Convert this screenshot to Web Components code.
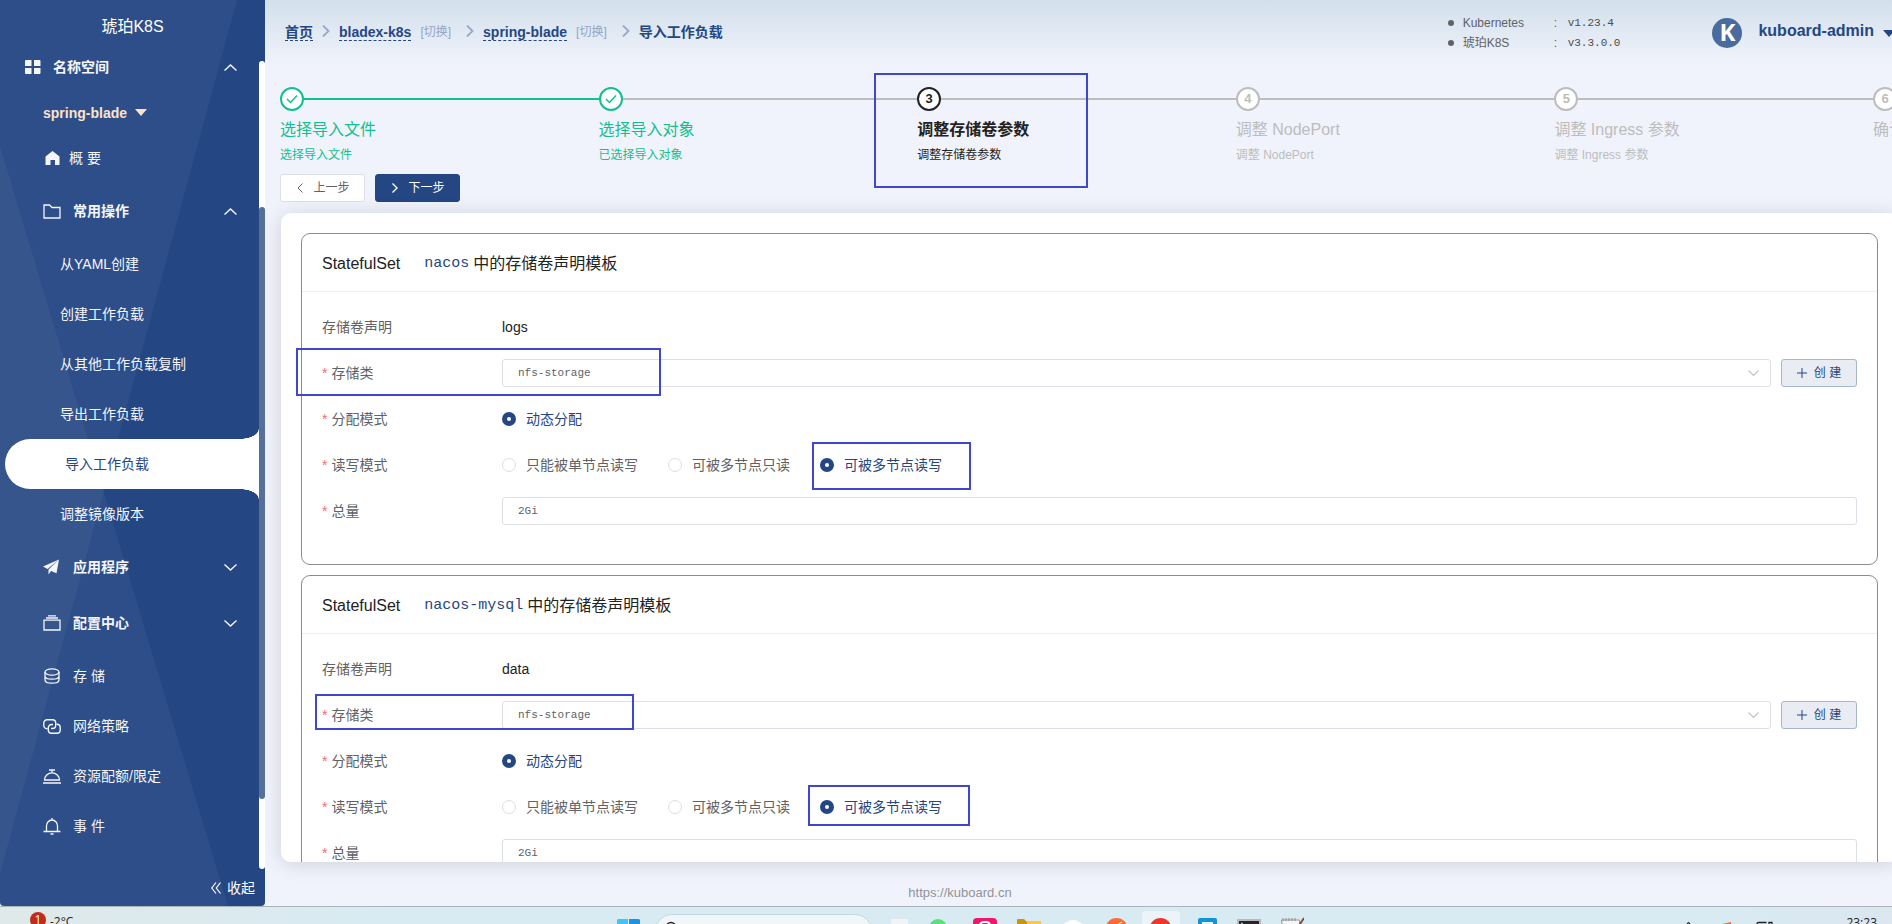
<!DOCTYPE html>
<html lang="zh-CN">
<head>
<meta charset="utf-8">
<title>导入工作负载 - 琥珀K8S</title>
<style>
  html, body { height: 100%; margin: 0; }
  body {
    --brand: #244783;
    --page: #f0f3fb;
    --line: #dcdfe6;
    --mono: "Liberation Mono", "DejaVu Sans Mono", monospace;
    display: grid;
    grid-template-rows: minmax(0, 1fr) 18px;
    overflow: hidden;
    background: var(--page);
    color: #222;
    font: 14px/20px "Liberation Sans", "Noto Sans CJK SC", sans-serif;
  }
  .app { display: grid; grid-template-columns: 265px minmax(0, 1fr); min-height: 0; }
</style>
</head>
<body>
<div class="app">
  <kb-sidebar>
    <nav-item kind="top" icon="grid" arrow="up">名称空间</nav-item>
    <nav-item kind="space">spring-blade</nav-item>
    <nav-item kind="home" icon="home">概 要</nav-item>
    <nav-item kind="group" icon="folder" arrow="up">常用操作</nav-item>
    <nav-item kind="sub">从YAML创建</nav-item>
    <nav-item kind="sub">创建工作负载</nav-item>
    <nav-item kind="sub">从其他工作负载复制</nav-item>
    <nav-item kind="sub">导出工作负载</nav-item>
    <nav-item kind="active">导入工作负载</nav-item>
    <nav-item kind="sub">调整镜像版本</nav-item>
    <nav-item kind="group" icon="plane" arrow="down">应用程序</nav-item>
    <nav-item kind="group" icon="files" arrow="down">配置中心</nav-item>
    <nav-item icon="coin">存 储</nav-item>
    <nav-item icon="link">网络策略</nav-item>
    <nav-item icon="dish">资源配额/限定</nav-item>
    <nav-item icon="bell">事 件</nav-item>
  </kb-sidebar>
  <kb-page>
    <kb-header slot="header"></kb-header>
    <kb-steps slot="steps">
      <kb-step state="done" line="done"><span slot="title">选择导入文件</span>选择导入文件</kb-step>
      <kb-step state="done"><span slot="title">选择导入对象</span>已选择导入对象</kb-step>
      <kb-step state="current" number="3"><span slot="title">调整存储卷参数</span>调整存储卷参数
        <mark-box slot="over" style="left:-43px;top:-14px;width:214px;height:115px"></mark-box></kb-step>
      <kb-step number="4"><span slot="title">调整 NodePort</span>调整 NodePort</kb-step>
      <kb-step number="5"><span slot="title">调整 Ingress 参数</span>调整 Ingress 参数</kb-step>
      <kb-step number="6"><span slot="title">确认</span></kb-step>
    </kb-steps>
    <kb-button slot="actions" icon="left">上一步</kb-button>
    <kb-button slot="actions" icon="right" kind="primary">下一步</kb-button>
    <claim-card workload="nacos" claim="logs">
      <mark-box style="left:-6px;top:114px;width:365px;height:48px"></mark-box>
      <mark-box style="left:510px;top:208px;width:159px;height:48px"></mark-box>
    </claim-card>
    <claim-card workload="nacos-mysql" claim="data">
      <mark-box style="left:13px;top:118px;width:319px;height:36px"></mark-box>
      <mark-box style="left:506px;top:209px;width:162px;height:41px"></mark-box>
    </claim-card>
  </kb-page>
</div>
<task-bar></task-bar>

<script>
const S = 'fill="none" stroke="currentColor"';
const ICONS = {
  grid: [16, 14, '<path fill="currentColor" d="M1 0h5.500v6H0V1q0-1 1-1zM9 0h5.500q1 0 1 1v5H9zM0 8h6.500v6H1q-1 0-1-1zM9 8h6.500v5q0 1-1 1H9z"/>'],
  home: [15, 14, '<path fill="currentColor" d="M7.500 0 14.500 5.500V14H10V9H5.500v5H.500V5.500z"/>'],
  folder: [18, 15, `<path ${S} stroke-width="1.300" d="M1 1h5.500l2.500 2.500h8V14H1z"/>`],
  plane: [17, 16, '<path fill="currentColor" d="M16 .500 0 7.500l4.500 2.500zM16 .500 5.500 10.500v5l2.500-3.500 5.500 2.300z"/>'],
  files: [18, 16, `<path ${S} stroke-width="1.300" d="M1 5.200h16V15H1zM3 3h12M5 .800h8"/>`],
  coin: [18, 16, `<g ${S} stroke-width="1.300"><ellipse cx="9" cy="4" rx="7" ry="3.200"/><path d="M2 4v8c0 1.800 3 3.200 7 3.200s7-1.400 7-3.200V4M2 8c0 1.800 3 3.200 7 3.200S16 9.800 16 8"/></g>`],
  link: [18, 15, `<g ${S} stroke-width="1.400"><path d="M4.500 9.800H4A3.200 3.200 0 0 1 .800 6.600V4A3.200 3.200 0 0 1 4 .800h5.500A3.200 3.200 0 0 1 12.700 4v2.300A3.200 3.200 0 0 1 9.500 9.500H8"/><path d="M13.500 5.200h.500A3.200 3.200 0 0 1 17.200 8.400V11a3.200 3.200 0 0 1-3.200 3.200H8.500A3.200 3.200 0 0 1 5.300 11V8.700A3.200 3.200 0 0 1 8.500 5.500H10"/></g>`],
  dish: [18, 15, `<path ${S} stroke-width="1.300" d="M1.500 11a7.500 7.200 0 0 1 15 0zM0 14h18M9 4V1M6 1h6"/>`],
  bell: [18, 17, `<path ${S} stroke-width="1.300" d="M3.500 13.500V8a5.500 6 0 0 1 11 0v5.500M.500 13.500h17M9 2V0M7.500 16h3"/>`],
  up: [13, 7, `<path ${S} stroke-width="1.400" d="M.500 6.500l6-5.500 6 5.500"/>`],
  down: [13, 7, `<path ${S} stroke-width="1.400" d="M.500.500l6 5.500 6-5.500"/>`],
  caret: [12, 7, '<path fill="currentColor" d="M0 0h12L6 7z"/>'],
  fold: [10, 12, `<path ${S} stroke-width="1.200" d="M5 .500.800 6 5 11.500M9.500.500 5.300 6l4.200 5.500"/>`],
  crumb: [8, 12, `<path ${S} stroke-width="1.800" d="M1 .500 6.500 6 1 11.500"/>`],
  left: [6, 10, `<path ${S} d="M5.500.500 1 5l4.500 4.500"/>`],
  right: [6, 10, `<path ${S} stroke-width="1.400" d="M.500.500 5 5 .500 9.500"/>`],
  select: [11, 7, `<path ${S} stroke-width="1.200" d="M.500.500l5 5 5-5"/>`],
  plus: [10, 10, `<path ${S} d="M5 0v10M0 5h10"/>`],
  check: [12, 10, `<path ${S} stroke-width="1.500" d="M1 5l3.500 3.500L11 1.500"/>`]
};
const icon = name => {
  const [w, h, body] = ICONS[name];
  return `<svg aria-hidden="true" width="${w}" height="${h}" viewBox="0 0 ${w} ${h}">${body}</svg>`;
};
const RESET = `*{box-sizing:border-box} a{color:inherit;text-decoration:none}
  button,input,select{font:inherit;color:inherit;margin:0;background:none;border:0;padding:0;text-align:left}
  svg{display:block;flex:none}`;
const define = (tag, render) => customElements.define(tag, class extends HTMLElement {
  constructor() { super(); this.attachShadow({ mode: 'open' }); }
  connectedCallback() { this.shadowRoot.innerHTML = render(this); }
});

define('mark-box', () => `<style>:host{display:block;position:absolute;box-sizing:border-box;border:2px solid #3f48cc;pointer-events:none;z-index:2}</style>`);

define('kb-sidebar', () => `<style>${RESET}
  :host{display:grid;position:relative;isolation:isolate;min-height:0;overflow:hidden;color:#fff;background:var(--brand);
    grid-template:42px minmax(0,1fr) 37px / minmax(0,1fr) 6px;border-radius:0 0 4px 4px}
  :host::before,:host::after{content:"";position:absolute;inset:0;z-index:-1;background:rgba(255,255,255,.045)}
  :host::before{clip-path:polygon(0 0,237px 0,0 874px)}
  :host::after{clip-path:polygon(0 146px,228px 100%,0 100%)}
  h1{grid-area:1/1/2/3;margin:0;font-size:16px;font-weight:400;line-height:54px;text-align:center}
  nav{grid-area:2/1/3/2;min-height:0}
  .track{grid-area:1/2/4/3;margin:61px 0 37px;background:#fff;border-radius:3px;display:grid;grid-template-rows:146fr 592fr 70fr}
  .track i{grid-row:2;background:#566f99;border-radius:3px}
  .fold{grid-area:3/1/4/3;display:flex;align-items:center;justify-content:flex-end;gap:6px;padding-right:10px}
  </style><h1>琥珀K8S</h1><nav><slot></slot></nav><div class="track"><i></i></div>
  <button class="fold">${icon('fold')}收起</button>`);

define('nav-item', el => {
  const kind = el.getAttribute('kind') || 'item';
  const ic = el.getAttribute('icon'), arrow = el.getAttribute('arrow');
  const tag = arrow || kind === 'space' ? 'button' : 'a';
  return `<style>${RESET}
  :host{display:block}
  .row{display:flex;align-items:center;width:100%;height:50px;padding:0 22px 0 43px;color:#f4f6fa}
  .ic{width:30px;display:flex}
  .arrow{margin-left:auto}
  .top{padding-left:25px;font-weight:700}.top .ic{width:28px}
  .space{height:41px;font-weight:700;color:#fde2c8;gap:8px}
  .home .ic{width:26px;padding-left:2px}
  .group{height:56px;font-weight:700}
  .sub{padding-left:60px}
  .active{position:relative;width:auto;margin-left:5px;padding-left:60px;background:#fff;color:var(--brand);border-radius:25px 0 0 25px}
  .active::before,.active::after{content:"";position:absolute;right:0;width:19px;height:10px}
  .active::before{bottom:100%;background:radial-gradient(19px 10px at 0 0,transparent 96%,#fff)}
  .active::after{top:100%;background:radial-gradient(19px 10px at 0 100%,transparent 96%,#fff)}
  </style><${tag} class="row ${kind}" ${tag === 'a' ? 'href="#"' : ''}>${ic ? `<span class="ic">${icon(ic)}</span>` : ''}<slot></slot>${
    kind === 'space' ? icon('caret') : ''}${arrow ? `<span class="arrow">${icon(arrow)}</span>` : ''}</${tag}>`;
});

define('kb-page', () => `<style>${RESET}
  :host{display:flex;flex-direction:column;min-height:0;min-width:0;overflow:hidden;
    background:linear-gradient(#d3e0ec,var(--page) 65px)}
  .actions{display:flex;gap:10px;padding:0 15px;margin-bottom:11px}
  main{position:relative;flex:1;min-height:0;margin:0 -6px 0 16px;padding:20px 20px 0;overflow:auto;scrollbar-width:none;
    display:flex;flex-direction:column;gap:10px;background:#fff;border-radius:10px;box-shadow:0 2px 20px rgba(0,0,0,.14)}
  footer{height:44px;padding:21px 237px 0 0;text-align:center;font-size:13px;color:#909399}
  </style><slot name="header"></slot><slot name="steps"></slot>
  <div class="actions"><slot name="actions"></slot></div><main><slot></slot></main>
  <footer><a href="#">https://kuboard.cn</a></footer>`);

define('kb-header', () => `<style>${RESET}
  :host{display:flex;height:87px;padding-left:20px;color:var(--brand)}
  nav{display:flex;height:20px;margin-top:22px;font-weight:700}
  nav a{border-bottom:1px dashed var(--brand);height:19px}
  nav .sw{border:0;margin-left:9px;font-size:12px;font-weight:400;color:#94a5c3}
  nav svg{color:#97a9c6;margin:3px 9px 0}
  nav .sw + svg{margin-left:15px}
  dl{display:grid;grid-template:20px 20px / 91px 14px auto;margin:13px 0 0 auto;height:40px;color:#606266;font-size:12px}
  dt{display:flex;align-items:center}
  dt::before{content:"";width:6px;height:6px;margin:0 9px 0 -15px;border-radius:3px;background:#606266}
  dd{margin:0}
  dd.v{font:11px/20px var(--mono);color:#4a4c50}
  .user{display:flex;align-items:center;height:30px;margin:18px -3px 0 92px;font-size:16px;font-weight:700}
  .avatar{width:30px;height:30px;margin-right:16px;border-radius:15px;background:#4a6b9d;color:#fff;text-align:center;font:700 24px/28px "Open Sans",sans-serif}
  .user svg{margin-left:9px}
  .name{line-height:26px;height:30px}
  </style>
  <nav aria-label="面包屑"><a href="#">首页</a>${icon('crumb')}<a href="#">bladex-k8s</a><a class="sw" href="#">[切换]</a>${icon('crumb')}
  <a href="#">spring-blade</a><a class="sw" href="#">[切换]</a>${icon('crumb')}<span>导入工作负载</span></nav>
  <dl><dt>Kubernetes</dt><dd>:</dd><dd class="v">v1.23.4</dd><dt>琥珀K8S</dt><dd>:</dd><dd class="v">v3.3.0.0</dd></dl>
  <button class="user"><span class="avatar">K</span><span class="name">kuboard-admin</span>${icon('caret')}</button>`);

define('kb-steps', () => `<style>
  :host{display:grid;grid-template-columns:repeat(5,minmax(0,1fr)) 19px;height:87px;padding-left:15px}
  </style><slot></slot>`);

define('kb-step', el => `<style>
  :host{display:block;position:relative;color:#bdbdbd;white-space:nowrap;font-size:12px}
  :host([state=done]){color:#13bf8f}
  :host([state=current]){color:#222}
  .head{display:flex;align-items:center}
  .dot{box-sizing:border-box;flex:none;display:flex;align-items:center;justify-content:center;width:24px;height:24px;
    border:2px solid;border-radius:12px;background:#fff;font-size:13px;font-weight:700}
  .line{flex:1;height:2px;background:#bdbdbd}
  :host([line=done]) .line{background:#13bf8f}
  :host(:last-child) .line{display:none}
  .title{font-size:16px;line-height:38px}
  :host([state=current]) .title{font-weight:700}
  .desc{line-height:12px}
  </style><div class="head"><span class="dot">${el.getAttribute('number') || icon('check')}</span><span class="line"></span></div>
  <div class="title"><slot name="title"></slot></div><div class="desc"><slot></slot></div><slot name="over"></slot>`);

define('kb-button', el => `<style>${RESET}
  :host{display:block;color:#606266}
  button{display:flex;align-items:center;justify-content:center;gap:10px;min-width:85px;height:28px;padding:0 12px 0 14px;
    border:1px solid var(--line);border-radius:3px;background:#fff;font-size:12px}
  :host([kind=primary]) button{background:var(--brand);border-color:var(--brand);color:#fff}
  :host([kind=plain]) button{min-width:76px;padding:0 12px;gap:7px;background:#e9ecf3;border-color:#a7b5cd;color:var(--brand)}
  </style><button>${icon(el.getAttribute('icon'))}<slot></slot></button>`);

define('claim-card', el => {
  const name = el.getAttribute('workload');
  return `<style>${RESET}
  :host{display:block;position:relative;flex:none;border:1px solid #8c8c8c;border-radius:9px;font-size:14px}
  h2{display:flex;align-items:center;margin:0;height:58px;padding:2px 20px 0;border-bottom:1px solid #ebeef5;font-size:16px;font-weight:400;line-height:24px}
  h2 code{margin:0 4px 0 24px;font:15px/24px var(--mono);color:var(--brand)}
  form{display:grid;gap:18px;padding:21px 20px 39px}
  .row{display:grid;grid-template-columns:180px minmax(0,1fr);height:28px;align-items:center;color:#606266}
  .req::before{content:"*";color:#f56c6c;margin-right:4px}
  .claim{color:#222}
  .field{display:grid;grid-template-columns:minmax(0,1fr) auto;gap:10px}
  .pick{display:grid;align-items:center}
  .pick > *{grid-area:1/1}
  .pick svg{justify-self:end;margin-right:12px;color:#c0c4cc;pointer-events:none}
  select,input[type=text]{appearance:none;width:100%;height:28px;padding:0 15px;border:1px solid var(--line);border-radius:3px;background:#fff;font:11px/26px var(--mono);color:#606266}
  .radios{display:flex;gap:30px;align-items:center}
  .radios label{display:flex;align-items:center;gap:10px}
  input[type=radio]{appearance:none;width:14px;height:14px;border:1px solid var(--line);border-radius:7px;background:#fff}
  input[type=radio]:checked{border:5px solid var(--brand)}
  label:has(:checked){color:var(--brand)}
  </style>
  <h2>StatefulSet <code>${name}</code> 中的存储卷声明模板</h2>
  <form>
    <div class="row"><span>存储卷声明</span><span class="claim">${el.getAttribute('claim')}</span></div>
    <div class="row"><label class="req" for="cls">存储类</label><div class="field"><div class="pick"><select id="cls"><option>nfs-storage</option></select>${icon('select')}</div><kb-button kind="plain" icon="plus">创 建</kb-button></div></div>
    <div class="row"><span class="req">分配模式</span><div class="radios"><label><input type="radio" name="alloc" checked>动态分配</label></div></div>
    <div class="row"><span class="req">读写模式</span><div class="radios"><label><input type="radio" name="mode">只能被单节点读写</label><label><input type="radio" name="mode">可被多节点只读</label><label><input type="radio" name="mode" checked>可被多节点读写</label></div></div>
    <div class="row"><label class="req" for="size">总量</label><input type="text" id="size" value="2Gi"></div>
  </form><slot></slot>`;
});

define('task-bar', () => `<style>
  :host{display:grid;box-sizing:border-box;grid-template-columns:minmax(0,1fr) 688px minmax(0,1fr);width:calc(100% + 28px);height:18px;overflow:hidden;
    border-top:1px solid #a9b5bb;background:linear-gradient(90deg,#dfe9e9,#d8eaf2 20%,#d8eaf2 90%,#dce6ef);font:12px/18px "Open Sans",sans-serif;color:#222}
  .weather{display:flex;padding-left:30px;gap:4px}
  .badge{width:16px;height:16px;margin-top:5px;border-radius:8px;background:#c42b1c;color:#fff;line-height:16px;text-align:center}
  .deg{margin-top:6px}
  .tray{display:flex;justify-content:flex-end;gap:71px;padding-right:43px}
  .time{margin-top:7px}
  svg{display:block}
  </style>
  <div class="weather"><span class="badge">1</span><span class="deg">-2°C</span></div>
  <svg width="688" height="17" viewBox="616 907 688 17" aria-hidden="true">
    <path fill="#41c4f4" d="M618 919h10v8h-11v-7z"/><path fill="#1b93e0" d="M629 919h10l1 1v7h-11z"/>
    <rect x="655.500" y="914.500" width="216" height="32" rx="16" fill="#f0f6fa" stroke="#c2d8e0"/>
    <circle cx="671" cy="927" r="4.500" fill="none" stroke="#222" stroke-width="1.500"/>
    <path fill="#f3f3f3" d="M891 919h17v8h-17z"/>
    <circle cx="938" cy="928" r="9" fill="#57e07c"/>
    <rect x="973" y="918" width="24" height="24" rx="4" fill="#ee176b"/><path d="M980 926q0-4 4-4h2q4 0 4 4" fill="none" stroke="#fff" stroke-width="2"/>
    <path fill="#c89411" d="M1017 920q0-1 1-1h6l3 3v5h-10z"/><path fill="#f9c83c" d="M1027 921h14v6h-14z"/>
    <path fill="#fff" d="M1063 927q0-4 4-5 2-2 6-2t6 2q4 1 4 5z"/>
    <circle cx="1116.500" cy="929" r="11" fill="#fc6b35"/><path d="M1117 925l5-3" stroke="#fff"/>
    <rect x="1142" y="911" width="38" height="30" rx="4" fill="#edf4f9"/><circle cx="1160.500" cy="929" r="11" fill="#e8392b"/>
    <rect x="1198" y="918" width="19" height="12" rx="2" fill="#0f95d7"/><path fill="#e8f6fc" d="M1202 922h11v5h-11z"/>
    <path fill="#b9b9b9" d="M1237 919h24v8h-24z"/><path fill="#262626" d="M1239 921h20v6h-20z"/><path d="M1241 923l2 1" stroke="#fff"/>
    <path fill="#f5f5f5" stroke="#999" d="M1282.500 927l-1-7h18v7z"/><path d="M1283 918v3m3-3v3m3-3v3m3-3v3m3-3v3" stroke="#888"/><path d="M1304 918l-6 9" stroke="#8a4b2a" stroke-width="2"/>
  </svg>
  <div class="tray"><svg width="90" height="17" viewBox="1687 907 90 17" aria-hidden="true">
    <path d="M1689 924l1.500-1.500 1.500 1.500" fill="none" stroke="#333" stroke-width="1.200"/><path fill="#f0683f" d="M1724 924l9-2v2z"/>
    <path d="M1759 925v-1q0-1.500 1.500-1.500h8M1771 925v-2.500h3v2.500" fill="none" stroke="#222" stroke-width="1.300"/></svg>
    <span class="time">23:23</span></div>`);
</script>
</body>
</html>
